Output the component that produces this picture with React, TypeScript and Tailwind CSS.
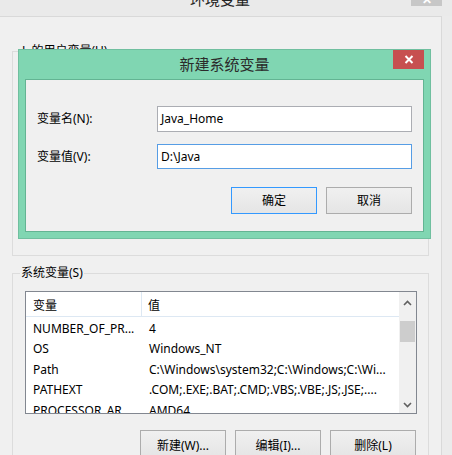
import React from "react";

const font = { fontFamily: '"Noto Sans", "Noto Sans CJK SC", sans-serif' };

const rows: [string, string][] = [
  ["NUMBER_OF_PR...", "4"],
  ["OS", "Windows_NT"],
  ["Path", "C:\\Windows\\system32;C:\\Windows;C:\\Wi..."],
  ["PATHEXT", ".COM;.EXE;.BAT;.CMD;.VBS;.VBE;.JS;.JSE;...."],
  ["PROCESSOR_AR...", "AMD64"],
];

const Chevron: React.FC<{ down?: boolean }> = ({ down }) => (
  <svg width="9" height="6" viewBox="0 0 9 6" className={down ? "rotate-180" : ""}>
    <path d="M1 5 L4.5 1.5 L8 5" fill="none" stroke="#606060" strokeWidth="1.6" />
  </svg>
);

const WinButton: React.FC<{ label: string; primary?: boolean; className?: string }> = ({
  label,
  primary,
  className = "",
}) => (
  <div
    className={`w-[86px] flex items-center justify-center text-[12px] text-black border bg-gradient-to-b from-[#f0f0f0] to-[#e5e5e5] ${
      primary ? "border-[#3399ff]" : "border-[#acacac]"
    } ${className}`}
  >
    {label}
  </div>
);

export default function App() {
  return (
    <div style={font} className="relative w-[452px] h-[455px] overflow-hidden bg-[#ebebeb] text-black">
      {/* outer window chrome */}
      <div className="relative h-[16px] bg-[#eaeaea] flex items-start">
        <div className="pl-[190px] -mt-[8px] text-[15px] leading-[15px] text-[#222]">环境变量</div>
        <div className="absolute left-[411px] top-0 w-[31px] h-[6px] bg-[#c7c7c7] overflow-hidden">
          <div className="-mt-[6px] text-center text-white text-[12px] font-bold leading-[12px]">✕</div>
        </div>
      </div>

      <div className="flex h-[439px]">
        <div className="w-[442px] border-t border-r border-[#d9d9d9] bg-[#f0f0f0] pt-[26px]">
          {/* user variables group */}
          <fieldset className="mx-[12px] h-[213px] border border-[#dcdcdc]">
            <legend className="ml-[8px] px-[1px] text-[12px] leading-[16px]">L 的用户变量(U)</legend>
          </fieldset>

          {/* system variables group */}
          <fieldset className="mx-[12px] mt-[9px] h-[200px] border border-[#dcdcdc] pl-[12px] pr-[11px]">
            <legend className="-ml-[5px] px-[1px] text-[12px] leading-[16px]">系统变量(S)</legend>
            <div className="mt-[10px] h-[123px] border border-[#828790] bg-white flex overflow-hidden">
              <div className="flex-1 text-[12px]">
                <div className="flex h-[25px] border-b border-[#dde8f3] pt-[3px]">
                  <div className="w-[116px] border-r border-[#dde8f3] -mt-[3px] pt-[3px] pl-[7px] flex items-center">变量</div>
                  <div className="flex-1 pl-[6px] flex items-center">值</div>
                </div>
                {rows.map(([k, v]) => (
                  <div key={k} className="flex h-[20.5px] items-center pt-[3px]">
                    <div className="w-[117px] pl-[7px] whitespace-nowrap overflow-hidden">{k}</div>
                    <div className="flex-1 pl-[6px] whitespace-nowrap overflow-hidden">{v}</div>
                  </div>
                ))}
              </div>
              <div className="w-[17px] bg-[#f0f0f0] flex flex-col items-center">
                <div className="h-[20px] flex items-center justify-center pt-[2px]">
                  <Chevron />
                </div>
                <div className="mt-[9px] w-[15px] h-[21px] bg-[#cdcdcd]" />
                <div className="flex-1" />
                <div className="h-[17px] flex items-center justify-center">
                  <Chevron down />
                </div>
              </div>
            </div>
            <div className="mt-[16px] flex justify-end gap-[9px] pr-[1px]">
              <WinButton label="新建(W)..." className="h-[28px] pt-[4px]" />
              <WinButton label="编辑(I)..." className="h-[28px] pt-[4px]" />
              <WinButton label="删除(L)" className="h-[28px] pt-[4px]" />
            </div>
          </fieldset>
        </div>
        <div className="flex-1 bg-[#ebebeb]" />
      </div>

      {/* new system variable dialog */}
      <div className="absolute left-[18px] top-[49px] w-[413px] h-[190px] bg-[#80d6b2] border border-[#70bf9f] flex flex-col px-[6px] pb-[6px]">
        <div className="relative h-[29px] flex items-center justify-center text-[15px] text-[#2b2b2b]">
          新建系统变量
          <div className="absolute right-[0px] top-0 w-[31px] h-[19px] bg-[#c75050] flex items-center justify-center">
            <svg width="10" height="9" viewBox="0 0 10 9">
              <path d="M1.5 1 L8.5 8 M8.5 1 L1.5 8" stroke="white" strokeWidth="2" />
            </svg>
          </div>
        </div>
        <div className="flex-1 bg-[#f0f0f0] border border-[#63b493] pt-[26px] pl-[11px] pr-[11px] text-[12px]">
          <div className="flex items-center justify-between h-[26px]">
            <span>变量名(N):</span>
            <div className="w-[255px] h-[26px] border border-[#abadb3] bg-white flex items-center pl-[3px]">
              Java_Home
            </div>
          </div>
          <div className="flex items-center justify-between h-[25px] mt-[12px]">
            <span>变量值(V):</span>
            <div className="w-[255px] h-[25px] border border-[#569de5] bg-white flex items-center pl-[3px]">
              D:\Java
            </div>
          </div>
          <div className="mt-[18px] flex justify-end gap-[9px]">
            <WinButton label="确定" primary className="h-[27px]" />
            <WinButton label="取消" className="h-[27px]" />
          </div>
        </div>
      </div>
    </div>
  );
}
